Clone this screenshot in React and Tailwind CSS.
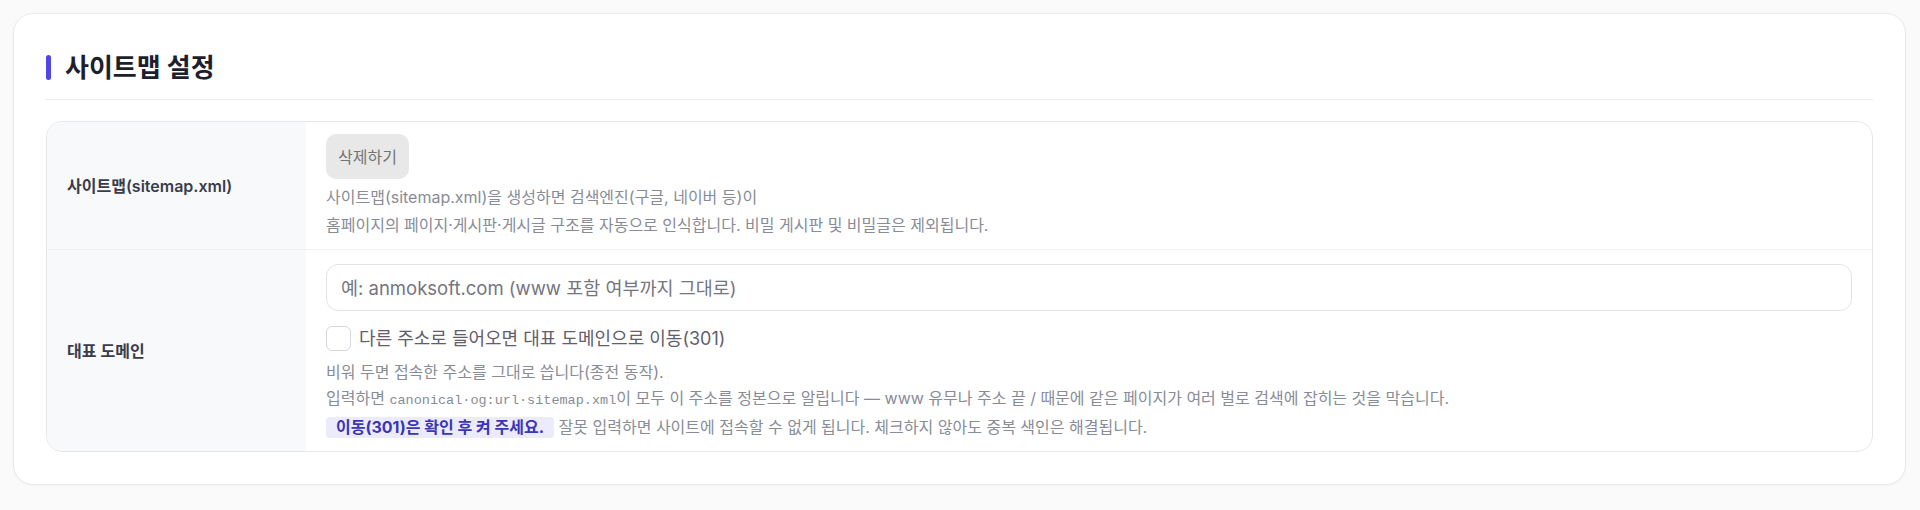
import React, { useState } from "react";

const font = "font-[Inter,'Noto_Sans_CJK_KR',sans-serif]";

const Row = ({ label, children, last }) => {
  return (
    <div className={`flex ${last ? "" : "border-b border-[#eeeff2]"}`}>
      <div className="w-[259px] shrink-0 bg-[#f8f9fb] flex items-center pl-[20px] text-[16px] font-semibold text-[#3a3c4c]">
        {label}
      </div>
      <div className="flex-1 px-[20px]">{children}</div>
    </div>
  );
};

const App = () => {
  const [domain, setDomain] = useState("");
  const [redirect, setRedirect] = useState(false);

  return (
    <div className={`min-h-screen bg-[#fafafa] pt-[13px] pb-[27px] ${font}`}>
      <div className="ml-[13px] mr-[14px] bg-white border border-[#e9e9ec] rounded-[20px] p-[32px] shadow-[0_1px_3px_rgba(0,0,0,0.03)]">
        {/* section title */}
        <div className="pb-[10px] border-b border-[#ececef]">
          <div className="flex items-center gap-[14px] h-[43px]">
            <span className="w-[5px] h-[25px] rounded-full bg-[#4f46e5]" />
            <h2 className="text-[26px] font-bold text-[#1e1f2e] leading-none">사이트맵 설정</h2>
          </div>
        </div>

        <div className="mt-[21px] border border-[#e6e7eb] rounded-[16px] overflow-hidden">
          <Row label="사이트맵(sitemap.xml)">
            <div className="pt-[12px] pb-[10px]">
              <button className="h-[45px] px-[12px] rounded-[10px] bg-[#e8e8e8] text-[16px] text-[#747474]">
                삭제하기
              </button>
              <p className="mt-[4px] text-[16px] leading-[28px] text-[#888c97]">
                사이트맵(sitemap.xml)을 생성하면 검색엔진(구글, 네이버 등)이
                <br />
                홈페이지의 페이지·게시판·게시글 구조를 자동으로 인식합니다. 비밀 게시판 및 비밀글은 제외됩니다.
              </p>
            </div>
          </Row>

          <Row label="대표 도메인" last>
            <div className="pt-[14px] pb-[11px]">
              <input
                type="text"
                value={domain}
                onChange={(e) => setDomain(e.target.value)}
                placeholder="예: anmoksoft.com (www 포함 여부까지 그대로)"
                className="w-full h-[47px] px-[14px] rounded-[12px] border border-[#e3e4e8] bg-white text-[18.5px] text-[#333] placeholder:text-[#74767f] outline-none"
              />
              <label className="mt-[15px] flex items-center gap-[8px] h-[25px] cursor-pointer">
                <input
                  type="checkbox"
                  checked={redirect}
                  onChange={(e) => setRedirect(e.target.checked)}
                  className="appearance-none w-[25px] h-[25px] rounded-[6px] border border-[#d6d7dc] bg-white checked:bg-[#4f46e5]"
                />
                <span className="text-[18px] text-[#5f606b]">다른 주소로 들어오면 대표 도메인으로 이동(301)</span>
              </label>
              <div className="mt-[8px] text-[16px] leading-[26px] text-[#888c97]">
                <p>비워 두면 접속한 주소를 그대로 씁니다(종전 동작).</p>
                <p>
                  입력하면 <span className="font-['Liberation_Mono',monospace] text-[13.5px]">canonical·og:url·sitemap.xml</span>이 모두 이 주소를 정본으로 알립니다 — www 유무나 주소 끝 / 때문에 같은 페이지가 여러 벌로 검색에 잡히는 것을 막습니다.
                </p>
                <p>
                  <span className="inline-block px-[10px] leading-[21px] rounded-[4px] bg-[#ebebfc] text-[#3b35b8] font-bold">
                    이동(301)은 확인 후 켜 주세요.
                  </span>{" "}
                  잘못 입력하면 사이트에 접속할 수 없게 됩니다. 체크하지 않아도 중복 색인은 해결됩니다.
                </p>
              </div>
            </div>
          </Row>
        </div>
      </div>
    </div>
  );
};

export default App;
